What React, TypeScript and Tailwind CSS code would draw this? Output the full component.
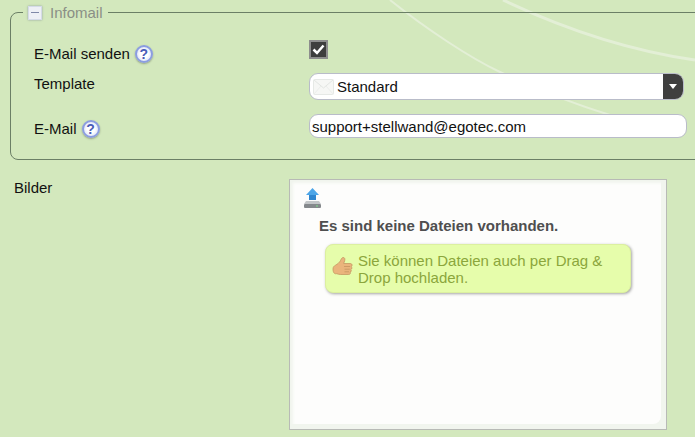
const HelpIcon = () => (
  <span className="ml-[5px] inline-flex size-[18px] items-center justify-center rounded-full border-2 border-[#8b9de0] bg-[radial-gradient(circle,#ffffff_40%,#c9d3f3_100%)] font-bold text-[14px] leading-none text-[#4a5cb8] shadow-[0_1px_2px_rgba(0,0,0,0.3)]">
    ?
  </span>
)

const MinusIcon = () => (
  <span className="flex size-[14px] items-center justify-center border border-[#d5dbe8] bg-[#eef0f6] shadow-[0_0_2px_rgba(80,90,130,0.5)]">
    <span className="h-px w-[8px] bg-[#7f88a8]"></span>
  </span>
)

const EnvelopeIcon = () => (
  <svg width="22" height="18" viewBox="0 0 22 18" className="shrink-0">
    <rect x="0.5" y="1.5" width="20" height="15" rx="1" fill="#f6f7f5" stroke="#e6e9e6" />
    <path d="M1 2l9.5 8L20 2" fill="none" stroke="#e3e6e3" strokeWidth="1" />
    <path d="M1 16l7-8M20 16l-7-8" fill="none" stroke="#eceeec" strokeWidth="1" />
  </svg>
)

const UploadIcon = () => (
  <svg width="20" height="22" viewBox="0 0 20 22">
    <path d="M9.500 1L16 8h-3v4H6V8H3z" fill="#4da6e8" />
    <rect x="6" y="8" width="7" height="5" fill="#2f86cf" />
    <path d="M3 14h13l2 3H1z" fill="#c3c6c8" />
    <rect x="1" y="17" width="17" height="4" rx="1" fill="#85898c" />
    <rect x="13" y="18.500" width="2" height="1" fill="#7fe08a" />
  </svg>
)

const ThumbIcon = () => (
  <svg width="21" height="21" viewBox="0 0 21 21" className="shrink-0">
    <path
      d="M1 12c0-2 1-3 2.500-3.800C5.500 7.200 7.500 5.500 8.500 3.500 9.200 2 9.800 0.500 11.200 0.500c1.500 0 2 1.500 1.500 3.200-.3 1-.8 1.900-1 2.800h6.500c1.300 0 1.900.8 1.900 1.700 0 .8-.5 1.300-1 1.500.5.300.8.800.8 1.400 0 .7-.5 1.300-1.100 1.500.3.300.5.700.5 1.200 0 .7-.5 1.200-1.200 1.400.2.300.3.600.3.900 0 .9-.8 1.400-1.700 1.400H8.500c-1.500 0-2.700-.6-4-.8C2.300 17.200 1 15.500 1 12z"
      fill="#eab47c"
      stroke="#c08f5c"
      strokeWidth="0.7"
    />
    <path d="M12 9.500h6M12.500 12.200h5.300M12.500 14.800h4.500" fill="none" stroke="#c08f5c" strokeWidth="0.7" />
  </svg>
)

export default function App() {
  return (
    <div className="relative h-[437px] w-[695px] overflow-hidden bg-[#d3e8bd] pt-[4px] font-['Liberation_Sans',Arial,sans-serif] text-[15px] leading-[17px] text-[#111]">
      {/* background swooshes */}
      <svg width="695" height="437" className="absolute left-0 top-0">
        <path d="M390 0C425 28 470 58 500 72S570 103 610 115" fill="none" stroke="#e3efd6" strokeWidth="2" />
        <path d="M503 0C560 27 625 50 695 60" fill="none" stroke="#e3efd6" strokeWidth="3" />
      </svg>

      <div className="relative pl-[10px]">
        <fieldset className="mr-[-20px] h-[156px] rounded-[8px] border border-[#6b7f66] pl-[13px]">
          <legend className="ml-[-1px] flex items-center gap-[8px] px-[5px] text-[#8a8f86]">
            <MinusIcon />
            <span>Infomail</span>
          </legend>
          <div className="mt-[19px] grid grid-cols-[275px_378px] pl-[10px]">
            <div className="flex h-[29px] items-start pt-[5px]">
              E-Mail senden
              <HelpIcon />
            </div>
            <div className="h-[29px]">
              <span className="flex size-[19px] items-center justify-center border-2 border-[#8d8d8d] bg-[#3d3d3d]">
                <svg width="13" height="11" viewBox="0 0 13 11">
                  <path d="M1.500 5.500L5 9l6.500-7.500" fill="none" stroke="#fff" strokeWidth="2.500" />
                </svg>
              </span>
            </div>
            <div className="flex h-[45px] items-start pt-[6px]">Template</div>
            <div className="h-[45px] pt-[4px]">
              <div className="flex h-[27px] w-[375px] items-center rounded-[9px] border border-[#b9bcc9] bg-white pl-[3px]">
                <EnvelopeIcon />
                <span className="ml-[2px] flex-1">Standard</span>
                <span className="flex h-[25px] w-[22px] items-center justify-center rounded-r-[8px] border-l-2 border-white bg-[#3f3f3f]">
                  <span className="size-0 border-x-[4px] border-t-[5px] border-x-transparent border-t-white"></span>
                </span>
              </div>
            </div>
            <div className="flex items-start pt-[6px]">
              E-Mail
              <HelpIcon />
            </div>
            <div className="flex h-[24px] w-[378px] items-center rounded-[9px] border border-[#b9bcc9] bg-white pl-[2px]">
              support+stellwand@egotec.com
            </div>
          </div>
        </fieldset>
      </div>

      <div className="relative mt-[19px] flex pl-[14px]">
        <div className="w-[275px]">Bilder</div>
        <div className="h-[251px] w-[378px] border border-[#b8bab6] bg-[#f1f5ee] pb-[5px] pr-[5px] pl-[1px] pt-[1px]">
          <div className="h-full rounded-br-[8px] bg-[#fdfdfc] pt-[6px] shadow-[inset_2px_2px_3px_#f1f5ee]">
            <div className="pl-[12px]">
              <UploadIcon />
            </div>
            <div className="mt-[8px] pl-[28px] font-bold text-[#4f4f4f]">Es sind keine Dateien vorhanden.</div>
            <div className="ml-[34px] mt-[10px] flex h-[49px] w-[306px] gap-[5px] rounded-[8px] border border-[#dcf0a0] bg-[#e6fdab] pl-[6px] pt-[7px] text-[#8ba63c] shadow-[1px_1px_3px_rgba(0,0,0,0.35)]">
              <div className="pt-[5px]">
                <ThumbIcon />
              </div>
              <div className="w-[260px]">Sie können Dateien auch per Drag &amp; Drop hochladen.</div>
            </div>
          </div>
        </div>
      </div>
    </div>
  )
}
